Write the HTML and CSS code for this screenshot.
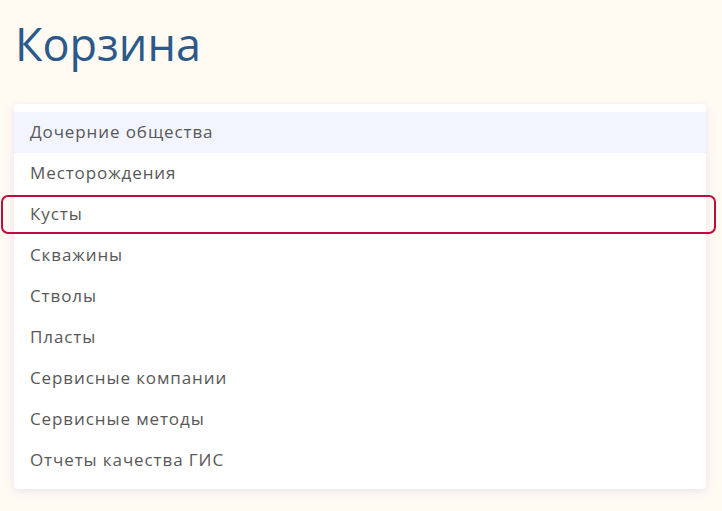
FILE: index.html
```html
<!DOCTYPE html>
<html lang="ru">
<head>
<meta charset="utf-8">
<title>Корзина</title>
<link rel="stylesheet" href="styles.css">
</head>
<body>
<main class="page">
  <h1 class="title">Корзина</h1>
  <div class="menu">
    <div class="item item-active">Дочерние общества</div>
    <div class="item">Месторождения</div>
    <div class="item item-focus">Кусты</div>
    <div class="item">Скважины</div>
    <div class="item">Стволы</div>
    <div class="item">Пласты</div>
    <div class="item">Сервисные компании</div>
    <div class="item">Сервисные методы</div>
    <div class="item">Отчеты качества ГИС</div>
  </div>
</main>
</body>
</html>
```
FILE: styles.css
```css
html, body {
  margin: 0;
  padding: 0;
  background: #fffaf2;
  height: 100%;
}
.page {
  padding: 0 16px 0 14px;
  font-family: "Open Sans", "Noto Sans", sans-serif;
}
.title {
  margin: 0;
  padding: 13px 0 0 1px;
  height: 104px;
  box-sizing: border-box;
  font-size: 45px;
  font-weight: 400;
  line-height: 62px;
  color: #2b5a8a;
}
.menu {
  background: #fff;
  border-radius: 4px;
  padding: 8px 0;
  box-shadow: 0 2px 8px rgba(120, 130, 200, 0.18);
}
.item {
  position: relative;
  height: 41px;
  box-sizing: border-box;
  padding: 0 0 2px 16px;
  line-height: 39px;
  font-size: 17px;
  letter-spacing: 0.9px;
  color: #585858;
}
.item-active {
  background: #f2f5fe;
}
.item-focus::after {
  content: "";
  position: absolute;
  left: -13px;
  right: -10px;
  top: 1px;
  bottom: 1px;
  border: 2px solid #c00c3c;
  border-radius: 7px;
}
```
